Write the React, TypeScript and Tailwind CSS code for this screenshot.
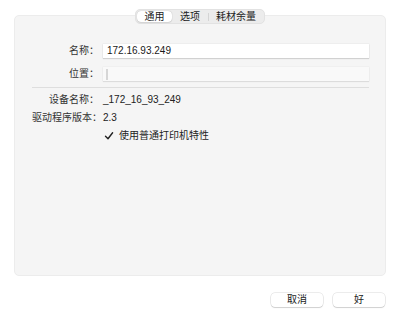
import React from "react";

const font = { fontFamily: '"Liberation Sans", "Noto Sans CJK SC", sans-serif' };

function Row({ label, children }: { label: string; children: React.ReactNode }) {
  return (
    <div className="flex items-center h-[18px]">
      <div className="w-[67px] text-right whitespace-nowrap text-[#333]">{label}</div>
      <div className="ml-[4px] flex-1 flex items-center text-[#222]">{children}</div>
    </div>
  );
}

export default function App() {
  return (
    <div
      className="w-[400px] h-[321px] bg-white flex flex-col text-[10px] leading-none overflow-hidden"
      style={font}
    >
      <div className="pt-[9px] px-[14px] flex flex-col">
        {/* segmented tabs */}
        <div className="relative z-10 self-center flex items-center h-[15px] w-[130px] rounded-[5px] bg-[#ececec] border border-[#e2e2e2] p-[1px]">
          <div className="w-[35px] h-full rounded-[4px] bg-white shadow-[0_0_1px_rgba(0,0,0,0.3),0_1px_1px_rgba(0,0,0,0.08)] flex items-center justify-center text-[#222]">
            通用
          </div>
          <div className="w-[36px] h-full flex items-center justify-center text-[#222]">选项</div>
          <div className="w-px h-[8px] bg-[#d4d4d4]" />
          <div className="flex-1 h-full flex items-center justify-center text-[#222]">耗材余量</div>
        </div>

        {/* group box */}
        <div className="-mt-[9px] h-[261px] rounded-[5px] bg-[#f5f5f5] border border-[#ececec] pt-[28px] pl-[17px] pr-[16px] flex flex-col">
          <div className="flex items-center h-[14px]">
            <div className="w-[67px] text-right whitespace-nowrap text-[#333]">名称：</div>
            <div className="ml-[4px] flex-1 h-[14px] bg-white shadow-[0_0_0_0.5px_rgba(0,0,0,0.06),0_1px_1px_rgba(0,0,0,0.12)] flex items-center pl-[4px] text-[#1a1a1a]">
              172.16.93.249
            </div>
          </div>
          <div className="flex items-center h-[14px] mt-[9px]">
            <div className="w-[67px] text-right whitespace-nowrap text-[#333]">位置：</div>
            <div className="ml-[4px] flex-1 h-[14px] bg-[#f9f9f9] shadow-[0_0_0_0.5px_rgba(0,0,0,0.04),0_1px_1px_rgba(0,0,0,0.08)] flex items-center pl-[3px]">
              <div className="w-[2px] h-[11px] bg-[#d6d6d6]" />
            </div>
          </div>
          <div className="mt-[6px] h-px bg-[#dedede]" />
          <div className="mt-[3px] flex flex-col">
            <Row label="设备名称：">_172_16_93_249</Row>
            <Row label="驱动程序版本：">2.3</Row>
            <Row label="">
              <svg width="10" height="10" viewBox="0 0 10 10" className="ml-[1px]">
                <path d="M1.5 5.3 L4 7.8 L8.6 1.8" fill="none" stroke="#222" strokeWidth="1.4" strokeLinecap="round" strokeLinejoin="round" />
              </svg>
              <span className="ml-[5px]">使用普通打印机特性</span>
            </Row>
          </div>
        </div>
      </div>

      {/* buttons */}
      <div className="mt-[17px] pr-[15px] flex justify-end gap-[10px]">
        <div className="w-[52px] h-[14px] rounded-[4px] bg-white shadow-[0_0_0_0.5px_rgba(0,0,0,0.15),0_1px_1px_rgba(0,0,0,0.12)] flex items-center justify-center text-[#222]">
          取消
        </div>
        <div className="w-[52px] h-[14px] rounded-[4px] bg-white shadow-[0_0_0_0.5px_rgba(0,0,0,0.15),0_1px_1px_rgba(0,0,0,0.12)] flex items-center justify-center text-[#222]">
          好
        </div>
      </div>
    </div>
  );
}
